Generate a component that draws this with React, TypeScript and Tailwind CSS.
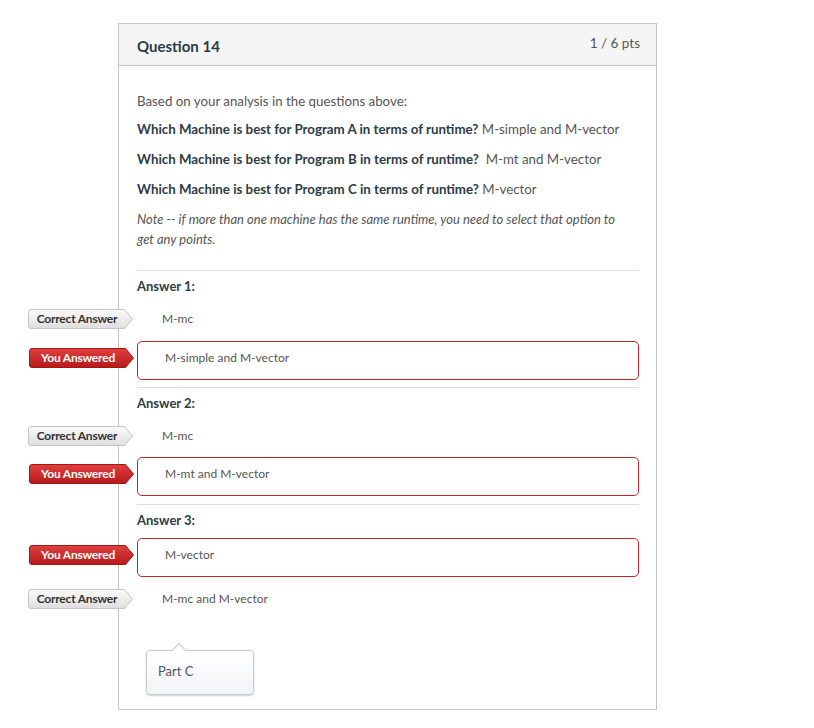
import React from "react";

function Label({ kind, top }: { kind: "correct" | "you"; top: number }) {
  const isYou = kind === "you";
  return (
    <div className="absolute left-[-109px] h-[20px] w-[106px]" style={{ top }}>
      <svg width="106" height="20" viewBox="0 0 106 20" className="absolute inset-0">
        <defs>
          <linearGradient id={isYou ? "gy" : "gc"} x1="0" y1="0" x2="0" y2="1">
            {isYou ? (
              <>
                <stop offset="0" stopColor="#e0403f" />
                <stop offset="1" stopColor="#b51a1a" />
              </>
            ) : (
              <>
                <stop offset="0" stopColor="#fbfbfb" />
                <stop offset="1" stopColor="#dedede" />
              </>
            )}
          </linearGradient>
        </defs>
        <path
          d="M3 0.5 H96.5 L104.5 10 L96.5 19.5 H3 Q0.5 19.5 0.5 17 V3 Q0.5 0.5 3 0.5 Z"
          fill={`url(#${isYou ? "gy" : "gc"})`}
          stroke={isYou ? "#a51717" : "#c4c4c4"}
          strokeWidth="1"
        />
      </svg>
      <span
        className={`absolute left-0 w-[98px] top-0 h-[20px] flex items-center justify-center text-[12px] font-bold tracking-[-0.2px] ${
          isYou ? "text-white" : "text-[#333]"
        }`}
      >
        {isYou ? "You Answered" : "Correct Answer"}
      </span>
    </div>
  );
}

function CorrectRow({ text, className = "" }: { text: string; className?: string }) {
  return (
    <div className={`relative h-[38px] flex items-center pl-[25px] text-[12px] text-[#555] ${className}`}>
      <Label kind="correct" top={9} />
      {text}
    </div>
  );
}

function YouRow({ text, className = "" }: { text: string; className?: string }) {
  return (
    <div
      className={`relative h-[39px] flex items-center pl-[27px] pb-[5px] text-[12px] text-[#555] border border-[#c5232a] rounded-[5px] ${className}`}
    >
      <Label kind="you" top={6} />
      {text}
    </div>
  );
}

export default function App() {
  return (
    <div
      className="w-[814px] h-[728px] bg-white overflow-hidden"
      style={{ fontFamily: "Lato, 'Open Sans', sans-serif" }}
    >
      <div className="ml-[118px] mt-[23px] w-[539px] h-[687px] border border-[#c4c4c4] flex flex-col">
        <div className="h-[42px] bg-[#f5f5f5] border-b border-[#c4c4c4] flex justify-between pl-[18px] pr-[16px]">
          <div className="text-[15px] font-bold text-[#2d3b45] mt-[12px] leading-[20px]">Question 14</div>
          <div className="text-[13.5px] text-[#555] mt-[9px] leading-[20px]">1 / 6 pts</div>
        </div>
        <div className="pl-[18px] pr-[17px] pt-[25px] text-[13.3px] leading-[20px] text-[#555]">
          <p className="mb-[8px]">Based on your analysis in the questions above:</p>
          <p className="mb-[10px]">
            <span className="font-bold text-[#2d3b45]">Which Machine is best for Program A in terms of runtime?</span>{" "}
            M-simple and M-vector
          </p>
          <p className="mb-[10px]">
            <span className="font-bold text-[#2d3b45]">Which Machine is best for Program B in terms of runtime?</span>
            {"\u00a0 "}M-mt and M-vector
          </p>
          <p className="mb-[10px]">
            <span className="font-bold text-[#2d3b45]">Which Machine is best for Program C in terms of runtime?</span>{" "}
            M-vector
          </p>
          <p className="italic text-[13px] leading-[20px] text-[#555] pr-[12px]">
            Note -- if more than one machine has the same runtime, you need to select that option to get any points.
          </p>

          <div className="mt-[21px] border-t border-[#ddd]" />
          <div className="mt-[5px] font-bold text-[#2d3b45] text-[13px]">Answer 1:</div>
          <CorrectRow text="M-mc" className="mt-[4px]" />
          <YouRow text="M-simple and M-vector" className="mt-[3px]" />

          <div className="mt-[7px] border-t border-[#ddd]" />
          <div className="mt-[5px] font-bold text-[#2d3b45] text-[13px]">Answer 2:</div>
          <CorrectRow text="M-mc" className="mt-[4px]" />
          <YouRow text="M-mt and M-vector" className="mt-[2px]" />

          <div className="mt-[8px] border-t border-[#ddd]" />
          <div className="mt-[5px] font-bold text-[#2d3b45] text-[13px]">Answer 3:</div>
          <YouRow text="M-vector" className="mt-[8px]" />
          <CorrectRow text="M-mc and M-vector" className="mt-[3px]" />

          <div className="relative ml-[9px] mt-[32px] w-[108px] h-[45px] rounded-[4px] border border-[#c8c8c8] bg-gradient-to-b from-white to-[#f1f3f6] shadow-[0_1px_2px_rgba(0,0,0,0.18)] flex items-center pl-[11px] pb-[3px] text-[13px] text-[#555]">
            <div className="absolute left-[27px] top-[-6px] w-[10px] h-[10px] rotate-45 bg-white border-l border-t border-[#c8c8c8]" />
            Part C
          </div>
        </div>
      </div>
    </div>
  );
}
